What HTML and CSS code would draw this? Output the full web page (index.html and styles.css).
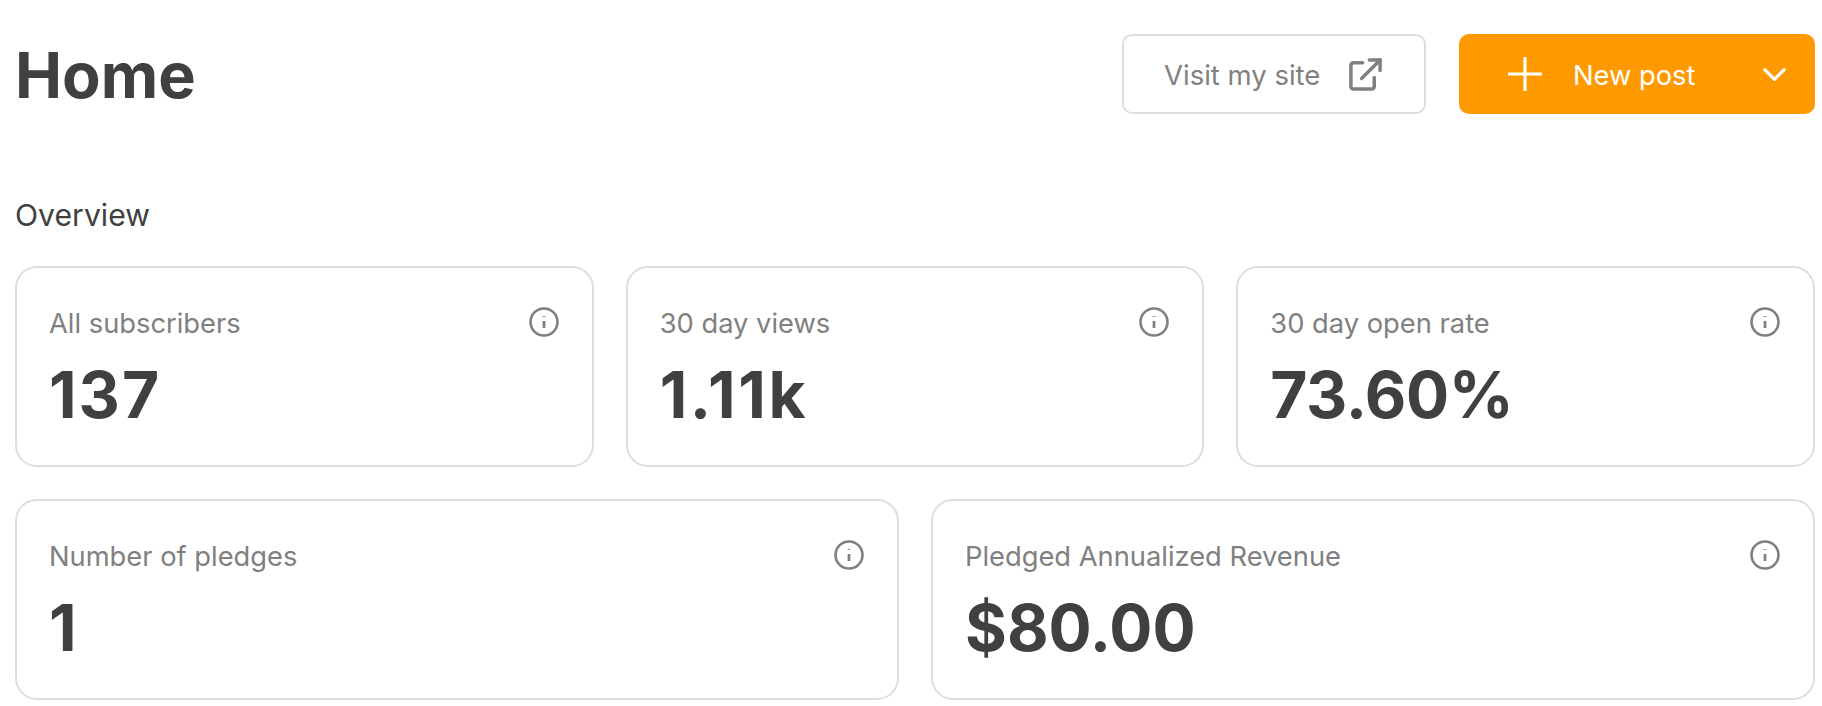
FILE: index.html
```html
<!DOCTYPE html>
<html lang="en">
<head>
<meta charset="utf-8">
<title>Home</title>
<link rel="stylesheet" href="styles.css">
</head>
<body>
<main class="page">
  <header class="topbar">
    <h1 class="title">Home</h1>
    <div class="actions">
      <a class="btn btn-outline">
        <span>Visit my site</span>
        <svg class="icon-ext" viewBox="0 0 36 36" fill="none" stroke="currentColor" stroke-width="3.600" stroke-linecap="round" stroke-linejoin="round"><path d="M15 6H5.5A2.5 2.5 0 0 0 3 8.500V30.500A2.500 2.500 0 0 0 5.500 33H24.500A2.500 2.500 0 0 0 27 30.500V21"/><path d="M14 22L33 3"/><path d="M22 3H33V14"/></svg>
      </a>
      <a class="btn btn-primary">
        <svg class="icon-plus" viewBox="0 0 32 32" fill="none" stroke="currentColor" stroke-width="3" stroke-linecap="round"><path d="M16 1V31M1 16H31"/></svg>
        <span class="btn-label">New post</span>
        <svg class="icon-chev" viewBox="0 0 20 14" fill="none" stroke="currentColor" stroke-width="2.600" stroke-linecap="round" stroke-linejoin="round"><path d="M2 3L10 11L18 3"/></svg>
      </a>
    </div>
  </header>
  <h2 class="section">Overview</h2>
  <section class="grid">
    <article class="card third"><div class="card-head"><span class="label">All subscribers</span><svg class="info" viewBox="0 0 30 30" fill="none" stroke="currentColor"><circle cx="15" cy="15" r="13.500" stroke-width="2.600"/><path d="M15 14V21" stroke-width="2.800"/><path d="M15 9V9.800" stroke-width="3"/></svg></div><div class="value value-one">137</div></article>
    <article class="card third"><div class="card-head"><span class="label">30 day views</span><svg class="info" viewBox="0 0 30 30" fill="none" stroke="currentColor"><circle cx="15" cy="15" r="13.500" stroke-width="2.600"/><path d="M15 14V21" stroke-width="2.800"/><path d="M15 9V9.800" stroke-width="3"/></svg></div><div class="value value-ones">1.11k</div></article>
    <article class="card third"><div class="card-head"><span class="label">30 day open rate</span><svg class="info" viewBox="0 0 30 30" fill="none" stroke="currentColor"><circle cx="15" cy="15" r="13.500" stroke-width="2.600"/><path d="M15 14V21" stroke-width="2.800"/><path d="M15 9V9.800" stroke-width="3"/></svg></div><div class="value value-tight">73.60%</div></article>
    <article class="card half"><div class="card-head"><span class="label">Number of pledges</span><svg class="info" viewBox="0 0 30 30" fill="none" stroke="currentColor"><circle cx="15" cy="15" r="13.500" stroke-width="2.600"/><path d="M15 14V21" stroke-width="2.800"/><path d="M15 9V9.800" stroke-width="3"/></svg></div><div class="value value-one">1</div></article>
    <article class="card half"><div class="card-head"><span class="label">Pledged Annualized Revenue</span><svg class="info" viewBox="0 0 30 30" fill="none" stroke="currentColor"><circle cx="15" cy="15" r="13.500" stroke-width="2.600"/><path d="M15 14V21" stroke-width="2.800"/><path d="M15 9V9.800" stroke-width="3"/></svg></div><div class="value">$80.00</div></article>
  </section>
</main>
</body>
</html>
```
FILE: styles.css
```css
* { box-sizing: border-box; }
html, body { margin: 0; background: #fff; }
body { font-family: Inter, "Liberation Sans", sans-serif; color: #404040; overflow: hidden; }
.page { width: 1822px; height: 706px; padding: 34px 7px 0 15px; }
.topbar { display: flex; justify-content: space-between; align-items: center; height: 80px; }
.title { margin: 2px 0 0; font-size: 63px; line-height: 72px; font-weight: 700; }
.actions { display: flex; gap: 33px; }
.btn { display: flex; align-items: center; height: 80px; padding-top: 2px; border-radius: 10px; font-size: 27.500px; white-space: nowrap; }
.btn-outline { width: 304px; padding: 2px 41px 0 40px; justify-content: space-between; border: 2px solid #dedede; color: #808080; }
.icon-ext { width: 35px; height: 35px; flex: none; margin-top: -2px; }
.btn-primary { width: 356px; padding: 2px 28px 0 49px; background: #ff9900; color: #fff; font-size: 27.300px; }
.icon-plus { width: 34px; height: 34px; flex: none; margin-top: -2px; }
.btn-label { margin-left: 31px; flex: 1; }
.icon-chev { width: 25px; height: 17px; flex: none; margin-top: -2px; }
.section { margin: 81px 0 0; font-size: 30.200px; line-height: 40px; font-weight: 400; color: #404040; }
.grid { display: grid; grid-template-columns: repeat(6, 1fr); gap: 32px; margin-top: 31px; }
.card { height: 201px; padding: 38px 33px 0 32px; border: 2px solid #dedede; border-radius: 22px; }
.third { grid-column: span 2; }
.half { grid-column: span 3; }
.card-head { display: flex; justify-content: space-between; align-items: flex-start; }
.label { font-size: 27.300px; line-height: 36px; color: #808080; }
.info { width: 30px; height: 30px; flex: none; color: #808080; margin-top: 1px; }
.value { margin-top: 15px; font-size: 64px; line-height: 76px; font-weight: 700; color: #404040; }
.value-one { letter-spacing: 2px; }
.value-ones { letter-spacing: 2.600px; }
.value-tight { letter-spacing: -0.400px; }
```
